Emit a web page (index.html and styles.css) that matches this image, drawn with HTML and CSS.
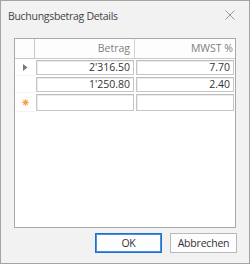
FILE: index.html
```html
<!DOCTYPE html>
<html>
<head>
    <meta charset="UTF-8">
    <title>Buchungsbetrag Details</title>
    <link rel="stylesheet" href="styles.css">
</head>
<body>
<div class="dialog">
    <div class="titlebar">
        <span class="title">Buchungsbetrag Details</span>
        <svg class="close" width="10" height="10" viewBox="0 0 10 10">
            <path d="M0.5 0.5 L9.5 9.5 M9.5 0.5 L0.5 9.5" stroke="#999" stroke-width="1" fill="none"/>
        </svg>
    </div>

    <div class="grid">
        <div class="head">
            <div class="ind"></div>
            <div class="hcell sep">Betrag</div>
            <div class="hcell last">MWST %</div>
        </div>

        <div class="row">
            <div class="ind">
                <svg width="5" height="7" viewBox="0 0 5 7"><path d="M0 0 L4.5 3.5 L0 7 Z" fill="#7a7a7a"/></svg>
            </div>
            <div class="cell">2'316.50</div>
            <div class="cell">7.70</div>
        </div>
        <div class="row">
            <div class="ind"></div>
            <div class="cell">1'250.80</div>
            <div class="cell">2.40</div>
        </div>
        <div class="row row-new">
            <div class="ind">
                <svg width="7" height="7" viewBox="0 0 7 7">
                    <circle cx="3.5" cy="3.5" r="2.2" fill="#f5901e"/>
                    <path d="M3.5 0 V7 M0 3.5 H7 M1 1 L6 6 M6 1 L1 6" stroke="#f7a64a" stroke-width="0.8"/>
                </svg>
            </div>
            <div class="cell"></div>
            <div class="cell"></div>
        </div>
    </div>

    <div class="buttons">
        <button class="btn btn-default">OK</button>
        <button class="btn">Abbrechen</button>
    </div>
</div>
</body>
</html>
```

FILE: styles.css
```css
* {
    margin: 0;
    padding: 0;
    box-sizing: border-box;
}

body {
    font-family: "Open Sans", "Noto Sans", sans-serif;
    font-size: 10.5px;
    color: #333;
    background: #f0f0f0;
}

.dialog {
    width: 250px;
    height: 264px;
    border: 1px solid #a4a4a4;
    background: #f2f2f2;
    display: flex;
    flex-direction: column;
}

.titlebar {
    height: 29px;
    display: flex;
    align-items: center;
    justify-content: space-between;
    padding: 0 14px 0 7px;
}

.title {
    font-size: 10.5px;
    color: #444;
    letter-spacing: -0.3px;
}

.close {
    display: block;
    margin-top: -2px;
}

.grid {
    margin: 8px 13px 0 13px;
    height: 190px;
    background: #fff;
    border: 1px solid #a9a9a9;
}

.head {
    display: grid;
    grid-template-columns: 20px 100px 100px;
    height: 20px;
    border-bottom: 1px solid #c9c9c9;
    background: #fdfdfd;
}

.head .ind {
    border-right: 1px solid #c9c9c9;
}

.hcell {
    text-align: right;
    color: #808080;
    line-height: 19px;
    padding-right: 4px;
}

.hcell.sep {
    border-right: 1px solid #d4d4d4;
}

.hcell.last {
    padding-right: 2px;
}

.row {
    display: grid;
    grid-template-columns: 20px 100px 100px;
    height: 17px;
}

.row .ind {
    display: flex;
    align-items: center;
    justify-content: center;
    border-bottom: 1px solid #f3f3f3;
}

.cell {
    margin: 1px;
    border: 1px solid #c6c6c6;
    border-top-color: #bdbdbd;
    box-shadow: inset 1px 1px 0 #ececec;
    text-align: right;
    padding-right: 3px;
    line-height: 13px;
    color: #333;
}

.row-new {
    height: 19px;
}

.buttons {
    display: flex;
    justify-content: flex-end;
    gap: 8px;
    margin-top: 5px;
    padding-right: 12px;
}

.btn {
    width: 67px;
    height: 20px;
    font-family: "Open Sans", "Noto Sans", sans-serif;
    font-size: 10.5px;
    letter-spacing: -0.2px;
    color: #333;
    background: #fdfdfd;
    border: 1px solid #b9b9b9;
}

.btn-default {
    border-color: #1f6fd0;
    box-shadow: inset 0 0 0 1px #4a92e0;
}
```
